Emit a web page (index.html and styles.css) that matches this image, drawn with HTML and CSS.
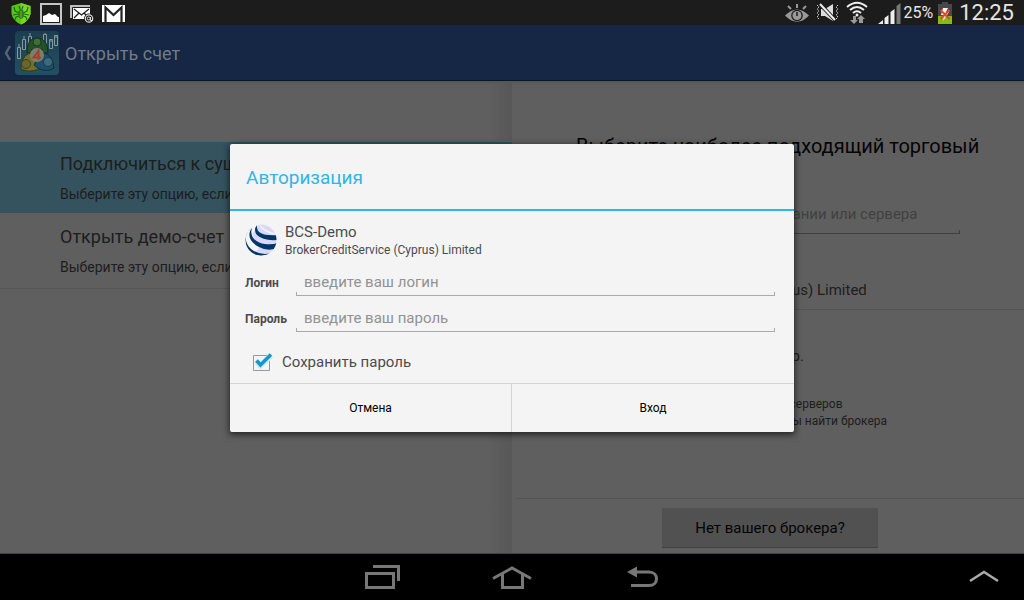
FILE: index.html
```html
<!DOCTYPE html>
<html lang="ru">
<head>
<meta charset="utf-8">
<meta name="viewport" content="width=device-width, initial-scale=1">
<title>Открыть счет</title>
<link rel="stylesheet" href="styles.css">
</head>
<body>
<header class="status">
  <div class="status-group notifications">
    <svg width="22" height="24" viewBox="0 0 22 24"><path d="M11 2 20.500 5V13Q19 20 11 23.500 3 20 1.500 13V5Z" fill="#55c51b"/><path d="M11 2 20.500 5V13Q19 20 11 23.500Z" fill="#79d81d"/><g stroke="#236a14" fill="none" stroke-width="1.200"><path d="m4 6 1 4 4 2M18 6l-1 4-4 2M3 14l5-1M19 14l-5-1M5 19l1-3 3-1M17 19l-1-3-3-1M9 5l1 3M13 5l-1 3"/></g><ellipse cx="11" cy="13" rx="3" ry="5" fill="#2b7d17"/><path d="M11 10v7" stroke="#62c51b"/></svg>
    <svg width="22" height="24" viewBox="0 0 22 24"><path d="M1 3h20v20H1z" fill="none" stroke="#c6c6c6" stroke-width="2"/><path d="M3 21v-6l3-1 3-2 3 2 3-1 3 3 1 0v5z" fill="#fff"/></svg>
    <svg width="24" height="24" viewBox="0 0 24 24"><path d="M0 4h20v13H0z" fill="#bdbdbd"/><path d="M2.500 6.500h18v12h-18z" fill="#fff" stroke="#1c1c1c"/><path d="m4 8 7.500 6L19 8M4 17l5-5M19 17l-5-5" fill="none" stroke="#1c1c1c" stroke-width="1.300"/><circle cx="19" cy="17.500" r="5" fill="#1c1c1c"/><circle cx="19" cy="17.500" r="3.700" fill="none" stroke="#ddd" stroke-width="1.200"/><path d="M20.500 16v3.500h2M20.300 17.500a1.500 1.500 0 1 0-3 0 1.500 1.500 0 0 0 3 0" fill="none" stroke="#ddd"/></svg>
    <svg width="24" height="24" viewBox="0 0 24 24"><path d="M0 4h23v17H0z" fill="#fff"/><path d="M3.500 21V6.500l8 7.500 8-7.500V21" fill="none" stroke="#222" stroke-width="2.200"/></svg>
  </div>
  <div class="status-group">
    <svg width="24" height="24" viewBox="0 0 24 24"><path d="M0 14.500Q12 2.500 24 14.500 12 27 0 14.500" fill="#999"/><circle cx="12" cy="14.500" r="5.800" fill="#1c1c1c"/><circle cx="12" cy="14.500" r="4.500" fill="#999"/><path d="M12 3v4M3 5l3 3M21 5l-3 3" stroke="#999" stroke-width="2"/><path d="M12 15v-4" stroke="#1c1c1c" stroke-width="1.500"/></svg>
    <svg class="mute" width="26" height="24" viewBox="0 0 26 24"><path d="M6 8h4l8-5v17l-8-5H6z" fill="#ddd"/><path d="m5 3 16 17" stroke="#1c1c1c" stroke-width="4"/><path d="m5 3 15 16" stroke="#eee" stroke-width="2"/><path d="M2 4l2 2-2 2 2 2-2 2 2 2-2 2 2 2M23 4l-2 2 2 2-2 2 2 2-2 2 2 2-2 2" fill="none" stroke="#ccc" stroke-dasharray="2 1"/></svg>
    <svg class="wifi" width="22" height="24" viewBox="0 0 22 24"><g fill="none" stroke="#eee" stroke-width="2"><path d="M1 6Q11-2.500 21 6M4 9Q11 3 18 9M7 12q4-3.500 8 0"/></g><circle cx="11" cy="14" r="1.500" fill="#eee"/><path d="M7 15h3v4h2l-4 4-4-4h3zM13 22v-4h-2l4-4 4 4h-2v4z" fill="#999"/></svg>
    <svg class="signal" width="24" height="24" viewBox="0 0 24 24"><path d="m1 23 5-4v4zM7.500 17l4-3v9h-4zM13.500 11l4-3v15h-4z" fill="#eee"/><path d="m19.500 5 4-3v21h-4z" fill="#777"/></svg>
    <span class="percent">25%</span>
    <svg class="battery" width="16" height="24" viewBox="0 0 16 24"><path d="M5 1h6v2h4v20H1V3h4z" fill="#484848"/><path d="M1 15h14v8H1z" fill="#82bd16"/><path d="M6 7h5l-2 4h3l-6 9 1-6H4z" fill="#f4f4f4"/><path d="m3.500 9 9 9m0-9-9 9" stroke="#e42" stroke-width="2"/></svg>
    <time class="clock">12:25</time>
  </div>
</header>

<div class="app">
  <header class="appbar">
    <a href="#" class="back" aria-label="Назад">
      <svg width="14" height="44" viewBox="0 0 14 44"><path d="M10 15 6 22l4 7" fill="none" stroke="#586473" stroke-width="2.500"/></svg>
      <svg width="46" height="46" viewBox="0 0 46 46"><defs><linearGradient id="tile" x2="0" y2="1"><stop stop-color="#1c3f50"/><stop offset="1" stop-color="#245062"/></linearGradient></defs><rect x="1" y="1" width="44" height="44" rx="4" fill="url(#tile)"/><g fill="none" stroke="#8b9699"><path d="M3.500 17.500h3v11h-3zM8.500 9.500h3v10h-3zM14.500 6.500h3v8h-3zM29.500 4.500h3v9h-3zM35.500 9.500h3v9h-3zM40.500 5.500h3v10h-3zM5 14v3m5-11v3m6-6v3m15-3v2m6 5v2m5-7v3"/></g><path d="M13 23c0-9 3-15 10-15s11 6 11 15z" fill="#23512a" stroke="#152f1b"/><circle cx="23" cy="12" r="4" fill="#416c3d" stroke="#193b1c"/><path d="M17 19h12l-2 9h-8z" fill="#15371d"/><path d="M7 39c0-10 5-17 13-16l7 14c-6 5-14 5-20 2z" fill="#73702a" stroke="#333b1b"/><circle cx="12" cy="34" r="4.500" fill="#6b6630" stroke="#3b411c"/><path d="M26 24c7-3 13 3 14 14-6 4-14 3-20-3z" fill="#1d4e6c" stroke="#132f40"/><circle cx="34" cy="32" r="4.500" fill="#3c6a7c" stroke="#163b50"/><circle cx="23" cy="25" r="7" fill="#7b7d7b"/><path d="M24.500 30v-9l-5 6.500h7.500" fill="none" stroke="#a4431a" stroke-width="2"/></svg>
    </a>
    <h1 class="title">Открыть счет</h1>
  </header>
  <main class="panes">
    <nav class="choices">
      <a href="#" class="choice selected"><span class="choice-name">Подключиться к существующему</span><span class="choice-note">Выберите эту опцию, если у вас уже есть счет</span></a>
      <a href="#" class="choice"><span class="choice-name">Открыть демо-счет</span><span class="choice-note">Выберите эту опцию, если у вас нет счета</span></a>
    </nav>
    <section class="brokers">
      <h2 class="brokers-title">Выберите наиболее подходящий торговый</h2>
      <input class="line-input search" type="text" aria-label="Поиск" placeholder="введите название компании или сервера">
      <div class="broker">BrokerCreditService (Cyprus) Limited</div>
      <div class="empty">
        <p class="empty-name">MetaQuotes Software Corp.</p>
        <p class="empty-note">Показана часть серверов<br>Используйте поиск, чтобы найти брокера</p>
      </div>
      <footer class="brokers-foot"><button type="button" class="no-broker">Нет вашего брокера?</button></footer>
    </section>
  </main>
</div>

<div class="overlay">
  <form class="dialog" role="dialog" aria-labelledby="dialog-title">
    <h2 class="dialog-title" id="dialog-title">Авторизация</h2>
    <div class="dialog-body">
      <div class="company">
        <svg width="32" height="32" viewBox="0 0 32 32"><defs><clipPath id="globe"><circle cx="16" cy="16" r="15.500"/></clipPath></defs><g clip-path="url(#globe)"><path d="M12 0h20v32H8L4 18z" fill="#d9d8fb"/><path d="M0 0h14L7 10l7 14-6 6H0z" fill="#f4f4f4"/><path d="M10 1C-1 7-2 18 6 25q9 7 20 4l-4 3Q2 36 0 16 0 5 10 1z" fill="#003767"/><path d="M7 4C4 13 11 19 20 20q8 1 12-1v5q-9 4-18-1C4 18 2 10 7 4z" fill="#003767"/><path d="M12 1c-1 8 6 11 20 10v5Q18 17 12 11 8 6 12 1z" fill="#003767"/><path d="M15 2q5 6 15 8" fill="none" stroke="#f4f4f4" stroke-width="1.500"/></g></svg>
        <div><div class="company-name">BCS-Demo</div><div class="company-note">BrokerCreditService (Cyprus) Limited</div></div>
      </div>
      <div class="field"><label for="login">Логин</label><input id="login" class="line-input" type="text" placeholder="введите ваш логин"></div>
      <div class="field"><label for="password">Пароль</label><input id="password" class="line-input" type="password" placeholder="введите ваш пароль"></div>
      <label class="save"><input type="checkbox" checked><svg class="tick" width="22" height="22" viewBox="0 0 22 22"><path d="M2.500 4.500h16v15h-16z" fill="none" stroke="#999"/><path d="m5.500 10 4 4.500L20 4.500" fill="none" stroke="#cfeaf5" stroke-width="6"/><path d="m5.500 9.500 4 4.500L20 3.500" fill="none" stroke="#1496c8" stroke-width="3.500"/></svg>Сохранить пароль</label>
    </div>
    <div class="actions"><button type="button">Отмена</button><button type="submit">Вход</button></div>
  </form>
</div>

<nav class="sysbar">
  <div class="keys">
    <button type="button" aria-label="Недавние"><svg width="40" height="28" viewBox="0 0 40 28"><path d="M5.500 10.500h27v14h-27z" fill="none" stroke="#777" stroke-width="3"/><path d="M12 3.500h25.500V18" fill="none" stroke="#777" stroke-width="3"/></svg></button>
    <button type="button" aria-label="Домой"><svg width="40" height="28" viewBox="0 0 40 28"><path d="M1 15.500 20 5l19 10.500M10.500 11v13.500h20V11" fill="none" stroke="#777" stroke-width="3"/></svg></button>
    <button type="button" aria-label="Вернуться"><svg width="40" height="28" viewBox="0 0 40 28"><path d="M12 9h14c10 0 10 13.500 0 13.500H8" fill="none" stroke="#777" stroke-width="3"/><path d="M4 9l10-5.500v11z" fill="#777"/></svg></button>
  </div>
  <button class="more" type="button" aria-label="Ещё"><svg width="32" height="28" viewBox="0 0 32 28"><path d="m2 18 14-9 14 9" fill="none" stroke="#aaa" stroke-width="2.500"/></svg></button>
</nav>
</body>
</html>
```
FILE: styles.css
```css
* { box-sizing: border-box; }
body { margin: 0; min-height: 100vh; display: flex; flex-direction: column; position: relative; font-family: Roboto, "Noto Sans", sans-serif; font-size: 15px; color: #1d1d1d; background: #5f5f5f; overflow: hidden; }
h1, h2, p { margin: 0; font-weight: 400; }
a { color: inherit; text-decoration: none; }
button, input { font: inherit; color: inherit; margin: 0; }
button { border: 0; background: none; padding: 0; }
svg { display: block; flex: none; }

.status { height: 25px; background: #1c1c1c; display: flex; justify-content: space-between; padding: 0 10px; color: #e6e6e6; }
.status-group { display: flex; align-items: center; }
.notifications { gap: 8px; }
.mute { margin-left: 6px; }
.wifi { margin-left: 5px; }
.signal { margin-left: 9px; }
.percent { font-size: 16px; margin-left: 3px; }
.battery { margin-left: 4px; }
.clock { font-size: 22px; margin-left: 6px; }

.app { flex: 1; display: flex; flex-direction: column; }
.appbar { height: 56px; background: #152744; border-bottom: 1px solid #0b1528; display: flex; align-items: center; }
.back { display: flex; align-items: center; }
.title { font-size: 18px; color: #747b86; margin-left: 5px; padding-top: 2px; }
.panes { flex: 1; display: grid; grid-template-columns: 1fr 1fr; background: linear-gradient(#555, #5f5f5f 4px); }
.choices { padding-top: 60px; background: linear-gradient(to left, #575757, transparent 24px); min-width: 0; }
.choice { display: flex; flex-direction: column; height: 72px; padding: 12px 0 0 60px; gap: 8px; white-space: nowrap; overflow: hidden; }
.choice + .choice { height: 76px; border-bottom: 1px solid #555; }
.choice.selected { background: #34535f; border-top: 1px solid #466672; padding-top: 10px; }
.choice-name { font-size: 18px; line-height: 24px; }
.choice-note { font-size: 14px; line-height: 20px; }
.brokers { display: flex; flex-direction: column; padding: 53px 0 0 4px; min-width: 0; }
.brokers-title { font-size: 20px; line-height: 24px; padding-left: 60px; color: #050505; white-space: nowrap; }
.line-input { height: 30px; padding: 2px 8px 0; outline: 0; border: 0; background: linear-gradient(#aaa, #aaa) left bottom / 1px 4px no-repeat, linear-gradient(#aaa, #aaa) right bottom / 1px 4px no-repeat, linear-gradient(#aaa, #aaa) bottom / 100% 1px no-repeat; }
.line-input::placeholder { color: #929292; opacity: 1; }
.search { margin: 42px 64px 0 60px; height: 34px; background: linear-gradient(#3f3f3f, #3f3f3f) right bottom / 1px 4px no-repeat, linear-gradient(#3f3f3f, #3f3f3f) bottom / 100% 1px no-repeat; padding: 0 8px 6px 49px; }
.search::placeholder { color: #414141; }
.broker { height: 76px; padding: 46px 0 0 105px; line-height: 20px; border-bottom: 1px solid #555; }
.empty { flex: 1; padding-top: 36px; }
.empty-name { line-height: 20px; padding-left: 103px; }
.empty-note { margin-top: 30px; text-align: center; font-size: 12px; line-height: 17px; }
.brokers-foot { border-top: 1px solid #555; padding: 9px 0 5px; text-align: center; }
.no-broker { height: 40px; padding: 0 33px; background: #515151; border-bottom: 1px solid #414141; color: #050505; }

.overlay { position: absolute; inset: 144px 0 auto; display: flex; justify-content: center; }
.dialog { width: 564px; max-width: 90%; background: #f4f4f4; color: #4b4b4f; border-radius: 2px; box-shadow: 0 2px 6px 1px rgba(0, 0, 0, .6); }
.dialog-title { font-size: 19px; line-height: 24px; color: #33b5e5; padding: 22px 16px 19px; border-bottom: 2px solid #33b5e5; }
.dialog-body { padding: 11px 19px 2px 15px; }
.company { display: flex; gap: 8px; align-items: center; margin-bottom: 7px; }
.company-name { line-height: 20px; }
.company-note { font-size: 12px; line-height: 16px; }
.field { display: flex; align-items: center; height: 36px; padding-bottom: 4px; }
.field label { width: 51px; padding-top: 4px; font-size: 12px; font-weight: 700; }
.field .line-input { flex: 1; min-width: 0; }
.save { display: flex; align-items: center; position: relative; height: 38px; margin-top: 6px; padding-left: 6px; gap: 9px; }
.save input { position: absolute; opacity: 0; width: 22px; height: 22px; }
.save input:not(:checked) + .tick path + path { display: none; }
.actions { display: grid; grid-template-columns: 1fr 1fr; border-top: 1px solid #d5d5d5; }
.actions button { height: 48px; font-size: 12px; color: #000; }
.actions button:first-child { border-right: 1px solid #d5d5d5; }

.sysbar { height: 47px; background: #000; border-top: 1px solid #2c485c; position: relative; display: flex; justify-content: center; align-items: center; }
.keys { display: flex; gap: 91px; }
.more { position: absolute; right: 24px; }
```
